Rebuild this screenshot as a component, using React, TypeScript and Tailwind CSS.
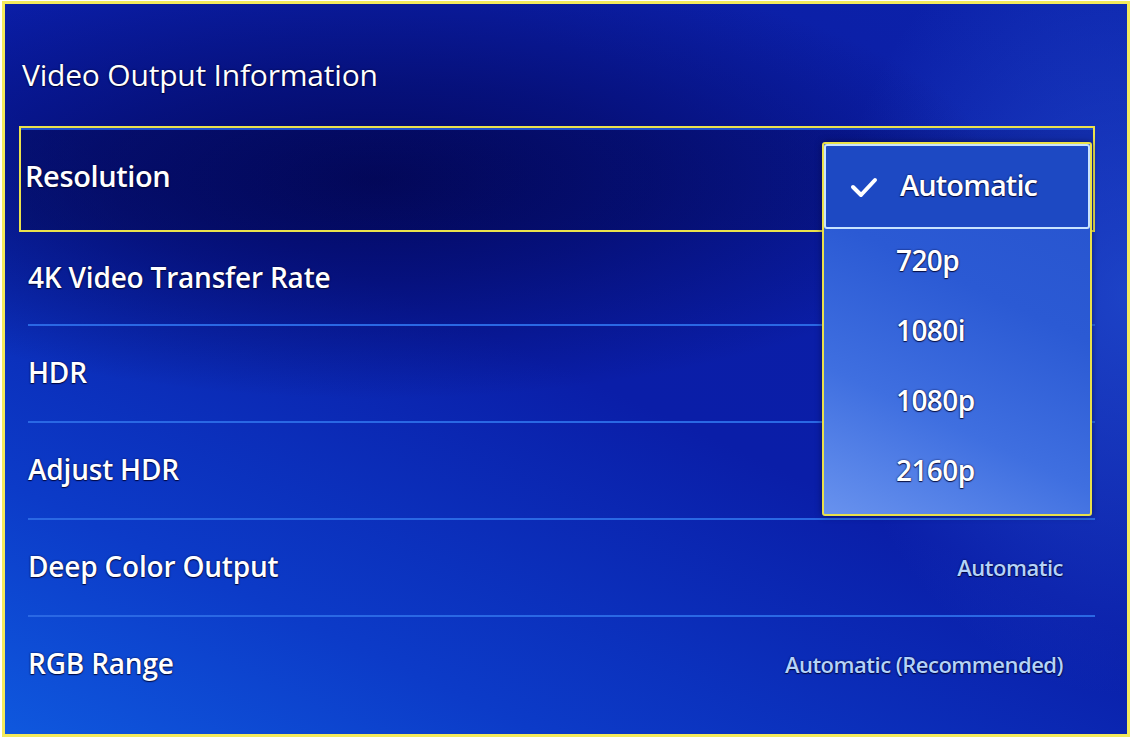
import React from "react";

const rows = [
  { label: "4K Video Transfer Rate", value: "" },
  { label: "HDR", value: "" },
  { label: "Adjust HDR", value: "" },
  { label: "Deep Color Output", value: "Automatic" },
  { label: "RGB Range", value: "Automatic (Recommended)" },
];

const options = ["720p", "1080i", "1080p", "2160p"];

const shadow = "[text-shadow:0_0_2px_rgba(0,0,50,0.9),0_1px_1px_rgba(0,0,40,0.8)]";

function Check() {
  return (
    <svg width="28" height="22" viewBox="0 0 28 22" className="shrink-0">
      <path d="M3 11 L11 19 L25 4" fill="none" stroke="white" strokeWidth="4" strokeLinecap="round" strokeLinejoin="round" />
    </svg>
  );
}

export default function App() {
  return (
    <div className="w-[1132px] h-[739px] bg-white px-[2px] pt-[1px] pb-[2px] box-border" style={{ fontFamily: "'Open Sans', 'Noto Sans', sans-serif" }}>
      <div className="relative h-full border-[3px] border-[#f4ea5c] overflow-hidden bg-[radial-gradient(ellipse_620px_220px_at_33%_24%,#030860_0%,rgba(3,8,96,0.6)_45%,rgba(3,8,96,0)_100%),radial-gradient(ellipse_300px_400px_at_100%_40%,rgba(40,90,220,0.6),rgba(40,90,220,0)),linear-gradient(205deg,#0c22aa_0%,#0b1ea6_25%,#0a1ea8_50%,#0c3bc8_80%,#0f58de_100%)]">
        {/* header */}
        <div className="h-[122px] pl-[17px] pt-[52px]">
          <h1 className={`text-[30px] leading-[38px] text-white tracking-[-0.2px] ${shadow}`}>Video Output Information</h1>
        </div>

        {/* Resolution, focused */}
        <div className="ml-[14px] mr-[32px] h-[106px] border-2 border-[#ebe24c] bg-[linear-gradient(90deg,rgba(2,6,70,0.35),rgba(2,6,80,0.15))]">
          <div className="h-full border-t-2 border-[#1f4fd0] flex items-center pl-[4px]">
            <span className={`text-[29px] font-semibold text-white tracking-[-0.4px] -mt-[8px] ${shadow}`}>Resolution</span>
          </div>
        </div>

        {/* other rows */}
        <div className="ml-[23px] mr-[32px]">
          {rows.map((r, i) => (
            <div key={r.label} className={`${i === 0 ? "h-[92px]" : "h-[97px] border-t-2 border-[#2a68e4]"} flex items-center justify-between pl-0 pr-[32px]`}>
              <span className={`text-[28px] font-semibold text-white tracking-[-0.2px] -mt-[3px] ${shadow}`}>{r.label}</span>
              {r.value && (
                <span className={`text-[22px] font-semibold text-[#b4d3fa] tracking-[-0.5px] ${shadow}`}>{r.value}</span>
              )}
            </div>
          ))}
        </div>

        {/* dropdown */}
        <div className="absolute left-[817px] top-[138px] w-[270px] h-[374px] border-2 border-[#e9e04a] rounded-[3px] bg-[linear-gradient(25deg,#6892ee_0%,#3f6fe0_30%,#2b5ad4_60%,#2652cd_100%)] shadow-[0_0_6px_rgba(0,0,40,0.5)]">
          <div className="h-[85px] border-2 border-[#c8e3ff] rounded-[3px] bg-[#1d49c3] flex items-center pl-[24px] gap-[22px]">
            <Check />
            <span className={`text-[29px] font-semibold text-white tracking-[-0.9px] -mt-[4px] ${shadow}`}>Automatic</span>
          </div>
          <div className="-mt-[4px]">
            {options.map((o) => (
              <div key={o} className="h-[70px] flex items-center pl-[72px]">
                <span className={`text-[28px] font-semibold text-white tracking-[-0.6px] ${shadow}`}>{o}</span>
              </div>
            ))}
          </div>
        </div>
      </div>
    </div>
  );
}
